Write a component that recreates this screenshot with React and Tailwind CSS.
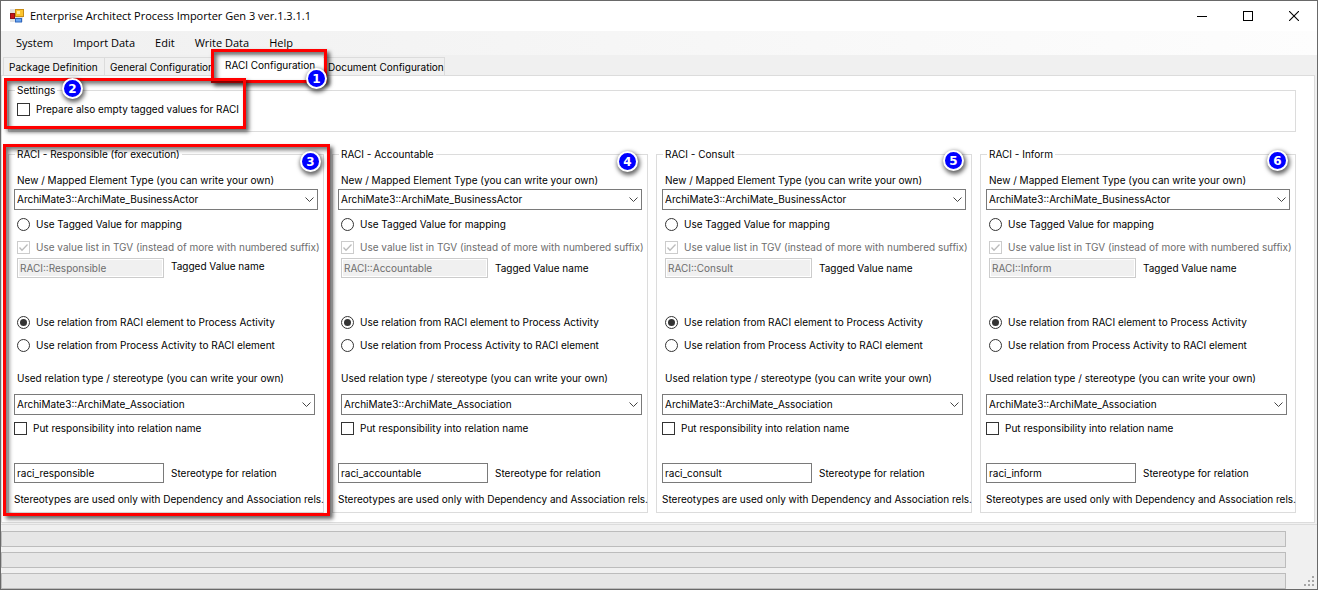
import React from "react";

const menus = ["System", "Import Data", "Edit", "Write Data", "Help"];

const groups = [
  { id: "responsible", title: "RACI - Responsible (for execution)", tag: "RACI::Responsible", stereotype: "raci_responsible", badge: 3, outlined: true },
  { id: "accountable", title: "RACI - Accountable", tag: "RACI::Accountable", stereotype: "raci_accountable", badge: 4, indent: true },
  { id: "consult", title: "RACI - Consult", tag: "RACI::Consult", stereotype: "raci_consult", badge: 5 },
  { id: "inform", title: "RACI - Inform", tag: "RACI::Inform", stereotype: "raci_inform", badge: 6 },
];

function Badge({ children, className }) {
  return (
    <span
      className={`absolute z-20 flex h-[21px] w-[21px] items-center justify-center rounded-full border-2 border-white bg-[#0000ff] font-['DejaVu_Sans'] text-[12px] leading-none font-bold text-white shadow-[1px_2px_4px_1px_rgba(0,0,0,0.6)] ${className}`}
    >
      {children}
    </span>
  );
}

function Outline({ className }) {
  return (
    <span
      className={`pointer-events-none absolute z-10 border-[3px] border-[#ff0000] shadow-[3px_3px_4px_rgba(0,0,0,0.6),inset_3px_3px_4px_rgba(0,0,0,0.55)] ${className}`}
    />
  );
}

function Check({ label, disabled, checked }) {
  return (
    <label className={`flex h-[15px] items-center gap-1.5 whitespace-nowrap ${disabled ? "text-[#6d6d6d]" : ""}`}>
      <span className="relative flex shrink-0">
        <input
          type="checkbox"
          defaultChecked={checked}
          disabled={disabled}
          className="peer h-[13px] w-[13px] appearance-none border border-[#333] bg-white disabled:border-[#ccc]"
        />
        <svg viewBox="0 0 13 13" className="pointer-events-none absolute inset-0 hidden h-[13px] w-[13px] peer-checked:block">
          <path d="M2.5 6.5 5 9.2 10.5 3.5" fill="none" stroke="#bbb" strokeWidth="1.3" />
        </svg>
      </span>
      {label}
    </label>
  );
}

function Radio({ label, name, checked }) {
  return (
    <label className="flex h-[15px] items-center gap-1.5 whitespace-nowrap">
      <input
        type="radio"
        name={name}
        defaultChecked={checked}
        className="flex h-[13px] w-[13px] shrink-0 appearance-none items-center justify-center rounded-full border border-[#333] bg-white before:h-[7px] before:w-[7px] before:rounded-full checked:before:bg-[#333]"
      />
      {label}
    </label>
  );
}

function Combo({ id, value }) {
  return (
    <div className="relative">
      <select id={id} className="block h-[21px] w-full appearance-none border border-[#7a7a7a] bg-white pr-5 pl-[2px] outline-none">
        <option>{value}</option>
      </select>
      <svg viewBox="0 0 9 5" className="pointer-events-none absolute top-2 right-1 h-[5px] w-[9px]">
        <path d="M0.5 0.5 4.5 4.5 8.5 0.5" fill="none" stroke="#444" />
      </svg>
    </div>
  );
}

function RaciGroup({ group }) {
  const { id, title, tag, stereotype, badge, indent, outlined } = group;
  return (
    <div className="relative min-w-0">
      <fieldset className="min-w-0 border border-[#dcdcdc] px-[5px] pb-[5px]">
        <legend className="ml-px h-4 px-[2px] leading-4">{title}</legend>
        <label htmlFor={`${id}-type`} className="mt-[10px] block h-4 pl-[3px] leading-4 whitespace-nowrap">
          New / Mapped Element Type (you can write your own)
        </label>
        <div className="mt-px">
          <Combo id={`${id}-type`} value="ArchiMate3::ArchiMate_BusinessActor" />
        </div>
        <div className="mt-[7px] flex flex-col gap-2 pl-[3px]">
          <Radio name={id} label="Use Tagged Value for mapping" />
          <Check label="Use value list in TGV (instead of more with numbered suffix)" disabled checked />
        </div>
        <div className="mt-[3px] flex items-center gap-[7px] pl-[3px]">
          <input
            id={`${id}-tag`}
            defaultValue={tag}
            disabled
            className="h-5 w-[147px] border border-[#ccc] bg-[#f0f0f0] px-[2px] text-[#6d6d6d] shadow-[inset_0_0_0_1px_#fff]"
          />
          <label htmlFor={`${id}-tag`} className={`leading-4 whitespace-nowrap ${outlined ? "pb-1" : ""}`}>
            Tagged Value name
          </label>
        </div>
        <div className="mt-[37px] flex flex-col gap-2 pl-[3px]">
          <Radio name={id} label="Use relation from RACI element to Process Activity" checked />
          <Radio name={id} label="Use relation from Process Activity to RACI element" />
        </div>
        <label htmlFor={`${id}-relation`} className="mt-[17px] block h-4 pl-[3px] leading-4 whitespace-nowrap">
          Used relation type / stereotype (you can write your own)
        </label>
        <div className={indent ? "mt-2 pl-[3px]" : "mt-2 pr-[3px]"}>
          <Combo id={`${id}-relation`} value="ArchiMate3::ArchiMate_Association" />
          <div className="mt-[6px]">
            <Check label="Put responsibility into relation name" />
          </div>
        </div>
        <div className="mt-[27px] flex items-center gap-[7px]">
          <input
            id={`${id}-stereotype`}
            defaultValue={stereotype}
            className="h-5 w-[150px] border border-[#7a7a7a] bg-white px-[2px] outline-none"
          />
          <label htmlFor={`${id}-stereotype`} className="leading-4 whitespace-nowrap">
            Stereotype for relation
          </label>
        </div>
        <p className="mt-2 h-4 leading-4 whitespace-nowrap">
          Stereotypes are used only with Dependency and Association rels.
        </p>
      </fieldset>
      {outlined && <Outline className="-top-[2px] -right-[6px] -bottom-[3px] -left-[5px]" />}
      <Badge className={indent ? "top-[5px] right-[10px]" : outlined ? "top-[5px] right-[3px]" : "top-1 right-2"}>{badge}</Badge>
    </div>
  );
}

function TitleBar() {
  return (
    <header className="flex h-[30px] items-center bg-white pl-[9px]">
      <svg viewBox="0 0 14 14" className="h-[14px] w-[14px]">
        <rect x="0" y="0" width="13" height="13" fill="#e2e2e2" />
        <rect x="0.5" y="4.5" width="4" height="5" fill="#c8141a" stroke="#8c1014" />
        <rect x="5.5" y="0.5" width="8" height="7" fill="#fbc42e" stroke="#c98d14" />
        <rect x="7" y="2" width="3" height="3" fill="#ffe9a0" />
        <rect x="5.5" y="9.5" width="6" height="3.5" fill="#6aa6f0" stroke="#2f66bd" />
      </svg>
      <h1 className="ml-[6px] grow font-['Open_Sans',sans-serif] text-[11px]">
        Enterprise Architect Process Importer Gen 3 ver.1.3.1.1
      </h1>
      <button aria-label="Minimize" className="flex h-full w-[46px] items-center justify-center">
        <svg viewBox="0 0 10 10" className="h-[10px] w-[10px]" shapeRendering="crispEdges">
          <path d="M0 5.5h10" stroke="#000" />
        </svg>
      </button>
      <button aria-label="Maximize" className="flex h-full w-[46px] items-center justify-center">
        <svg viewBox="0 0 10 10" className="h-[10px] w-[10px]" shapeRendering="crispEdges">
          <rect x="0.5" y="0.5" width="9" height="9" fill="none" stroke="#000" />
        </svg>
      </button>
      <button aria-label="Close" className="flex h-full w-[46px] items-center justify-center">
        <svg viewBox="0 0 10 10" className="h-[10px] w-[10px]">
          <path d="M0 0 10 10M10 0 0 10" stroke="#000" strokeWidth="1.1" />
        </svg>
      </button>
    </header>
  );
}

function Tabs() {
  const tab = "h-[18px] shrink-0 border border-b-0 border-[#dcdcdc] bg-[#f0f0f0] text-left leading-[18px] whitespace-nowrap";
  return (
    <div role="tablist" className="flex h-5 items-end bg-[#f0f0f0] pl-[2px]">
      <button role="tab" className={`w-[102px] pl-[5px] ${tab}`}>Package Definition</button>
      <button role="tab" className={`w-[108px] border-l-0 pl-[5px] ${tab}`}>General Configuration</button>
      <div className="relative">
        <button role="tab" aria-selected="true" className="relative -mb-px h-[21px] w-[110px] bg-white pl-3 text-left leading-[21px] whitespace-nowrap">
          RACI Configuration
        </button>
        <Outline className="-top-[6px] -right-[4px] -bottom-[8px] -left-[2px]" />
        <Badge className="-right-[4px] -bottom-[14px]">1</Badge>
      </div>
      <button role="tab" className={`w-[122px] border-l-0 pl-[5px] ${tab}`}>Document Configuration</button>
    </div>
  );
}

function App() {
  return (
    <div className="border border-[#696969] bg-[#f0f0f0] font-['Inter',Arial,sans-serif] text-[10px] text-black">
      <TitleBar />
      <nav className="flex h-6 items-center gap-5 bg-linear-to-r from-[#f0f0f0] to-[#fdfdfd] pl-[15px] font-['Open_Sans',sans-serif] text-[11px]">
        {menus.map((menu) => (
          <button key={menu}>{menu}</button>
        ))}
      </nav>
      <Tabs />
      <main className="mr-[2px] border border-[#dcdcdc] bg-white pt-[6px] pr-[18px] pb-[9px] pl-[6px]">
        <div className="relative">
          <fieldset className="border border-[#dcdcdc] px-[5px] pb-[14px]">
            <legend className="ml-px h-4 px-[2px] leading-4">Settings</legend>
            <div className="mt-1 pl-[3px]">
              <Check label="Prepare also empty tagged values for RACI" />
            </div>
          </fieldset>
          <Outline className="-top-1 -left-1 h-[51px] w-[242px]" />
          <Badge className="-top-1 left-[54px]">2</Badge>
        </div>
        <div className="mt-[14px] grid grid-cols-4 gap-2">
          {groups.map((group) => (
            <RaciGroup key={group.id} group={group} />
          ))}
        </div>
      </main>
      <footer className="mt-px flex items-end border-t border-[#dcdcdc] pt-[6px]">
        <div className="flex grow flex-col gap-[5px]">
          {["Package", "Element", "Total"].map((name) => (
            <progress
              key={name}
              value="0"
              max="100"
              aria-label={name}
              className="block h-4 w-full appearance-none border border-[#bcbcbc] bg-[#e6e6e6] [&::-webkit-progress-bar]:bg-[#e6e6e6]"
            />
          ))}
        </div>
        <div className="flex w-[31px] justify-end pr-[3px] pb-[3px]">
          <svg viewBox="0 0 10 10" className="h-[10px] w-[10px]" fill="#a6a6a6" shapeRendering="crispEdges">
            <path d="M8 0h2v2h-2zM4 4h2v2h-2zM8 4h2v2h-2zM0 8h2v2h-2zM4 8h2v2h-2zM8 8h2v2h-2z" />
          </svg>
        </div>
      </footer>
    </div>
  );
}

export default App;
